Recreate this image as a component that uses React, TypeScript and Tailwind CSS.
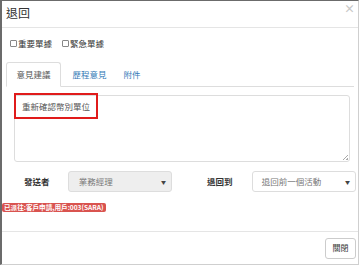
export default function App() {
  const font = { fontFamily: '"Noto Sans CJK TC", "Noto Sans", sans-serif' };

  return (
    <div
      style={font}
      className="w-[359px] h-[265px] bg-white border-t border-t-[#6b6b6b] border-l-2 border-l-[#6b6b6b] border-r border-r-[#cfcfcf] border-b border-b-[#cfcfcf] flex flex-col text-[#333] overflow-hidden"
    >
      {/* Header */}
      <div className="h-[27px] shrink-0 flex items-center justify-between pl-[4px] pr-[3px] border-b border-[#e5e5e5]">
        <span className="text-[12px] leading-none text-[#333] -mt-[2px]">退回</span>
        <span className="self-start mt-[2px] text-[11px] leading-none text-[#c8c8c8] font-bold">×</span>
      </div>

      {/* Body */}
      <div className="relative flex-1 flex flex-col pl-[4px] pr-[2px]">
        {/* Checkboxes */}
        <div className="h-[34px] flex items-center gap-[10px] pl-[4px] pb-[3px] text-[8.5px] leading-none">
          <label className="flex items-center gap-[1px]">
            <span className="w-[7px] h-[7px] border border-[#888] rounded-[1px] bg-white" />
            重要單據
          </label>
          <label className="flex items-center gap-[1px]">
            <span className="w-[7px] h-[7px] border border-[#888] rounded-[1px] bg-white" />
            緊急單據
          </label>
        </div>

        {/* Tabs */}
        <div className="h-[25px] flex items-stretch border-b border-[#ddd] mr-[2px] text-[8.5px] leading-none">
          <div className="w-[55px] -mb-px bg-white border border-[#ddd] border-b-white rounded-t-[3px] flex items-center justify-center text-[#555]">
            意見建議
          </div>
          <div className="w-[57px] flex items-center justify-center text-[#337ab7]">歷程意見</div>
          <div className="w-[28px] flex items-center justify-center text-[#337ab7]">附件</div>
        </div>

        {/* Textarea */}
        <div className="relative ml-[8px] mr-[6px] mt-[8px] h-[67px] border border-[#ddd] rounded-[3px] bg-white">
          <div className="absolute right-[1px] bottom-[1px] w-[5px] h-[5px] bg-[linear-gradient(135deg,transparent_45%,#aaa_45%,#aaa_55%,transparent_55%,transparent_75%,#aaa_75%)]" />
        </div>
        <div className="absolute left-[12px] top-[65px] w-[84px] h-[26px] border-2 border-[#e01b1b] flex items-center pl-[6px] text-[8.5px] leading-none text-[#555]">
          重新確認幣別單位
        </div>

        {/* Selects row */}
        <div className="h-[21px] mt-[9px] flex items-center text-[8.5px] leading-none">
          <span className="w-[62px] pl-[18px] font-bold text-[#333]">發送者</span>
          <div className="w-[105px] h-[21px] bg-[#eee] border border-[#ddd] rounded-[3px] flex items-center justify-between pl-[10px] pr-[5px] text-[#777]">
            <span>業務經理</span>
            <span className="text-[5px] text-[#444]">▼</span>
          </div>
          <span className="w-[80px] pl-[35px] font-bold text-[#333]">退回到</span>
          <div className="w-[105px] h-[21px] bg-white border border-[#ddd] rounded-[3px] flex items-center justify-between pl-[9px] pr-[5px] text-[#777]">
            <span>退回前一個活動</span>
            <span className="text-[5px] text-[#444]">▼</span>
          </div>
        </div>

        {/* Status label */}
        <div className="mt-[11px] -ml-[4px] w-[104px] h-[9px] bg-[#d9534f] rounded-[2px] flex items-center pl-[2px] text-[6.6px] leading-none font-bold text-white whitespace-nowrap">
          已派往:客戶申請,用戶:003(SARA)
        </div>
      </div>

      {/* Footer */}
      <div className="h-[33px] shrink-0 border-t border-[#e5e5e5] flex items-center justify-end pr-[2px]">
        <button className="w-[31px] h-[21px] border border-[#ccc] rounded-[3px] bg-white text-[8px] leading-none text-[#333]">
          關閉
        </button>
      </div>
    </div>
  );
}
